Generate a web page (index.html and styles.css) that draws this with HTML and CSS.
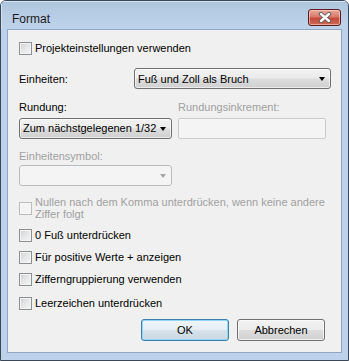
FILE: index.html
```html
<!DOCTYPE html>
<html>
<head>
<meta charset="utf-8">
<link rel="stylesheet" href="styles.css">
</head>
<body>
<div class="window">
  <div class="titlebar">
    <span class="title">Format</span>
    <button class="close" aria-label="Schließen">
      <svg width="14" height="11" viewBox="0 0 14 11">
        <path d="M3 2 L11 9 M11 2 L3 9" stroke="#5a5a5a" stroke-width="4.2" stroke-linecap="round"/>
        <path d="M3 2 L11 9 M11 2 L3 9" stroke="#ffffff" stroke-width="2.4" stroke-linecap="round"/>
      </svg>
    </button>
  </div>
  <div class="client">
    <label class="check row-proj"><span class="box"></span><span>Projekteinstellungen verwenden</span></label>

    <div class="units-row">
      <span class="units-label">Einheiten:</span>
      <div class="combo combo-units"><span>Fuß und Zoll als Bruch</span><span class="arrow"></span></div>
    </div>

    <div class="round-grid">
      <span class="lbl">Rundung:</span>
      <span class="lbl disabled">Rundungsinkrement:</span>
      <div class="combo"><span>Zum nächstgelegenen 1/32</span><span class="arrow"></span></div>
      <div class="textbox"></div>
    </div>

    <span class="lbl disabled sym-label">Einheitensymbol:</span>
    <div class="combo combo-disabled sym-combo"><span></span><span class="arrow"></span></div>

    <label class="check check-multi disabled"><span class="box"></span><span class="multi-text">Nullen nach dem Komma unterdrücken, wenn keine andere Ziffer folgt</span></label>

    <label class="check row-fuss"><span class="box"></span><span>0 Fuß unterdrücken</span></label>
    <label class="check row-plus"><span class="box"></span><span>Für positive Werte + anzeigen</span></label>
    <label class="check row-ziff"><span class="box"></span><span>Zifferngruppierung verwenden</span></label>
    <label class="check row-leer"><span class="box"></span><span>Leerzeichen unterdrücken</span></label>

    <div class="buttons">
      <button class="btn btn-default">OK</button>
      <button class="btn">Abbrechen</button>
    </div>
  </div>
</div>
</body>
</html>
```

FILE: styles.css
```css
* { box-sizing: border-box; }
html, body { margin: 0; padding: 0; background: #ffffff; }
body {
  font-family: "Liberation Sans", Arial, sans-serif;
  font-size: 11px;
  color: #000000;
}
.window {
  width: 349px;
  height: 361px;
  border: 1px solid #3b4756;
  border-radius: 6px 6px 0 0;
  background: #bdd2ea;
  display: flex;
  flex-direction: column;
  overflow: hidden;
}
.titlebar {
  height: 28px;
  display: flex;
  align-items: flex-start;
  justify-content: space-between;
  background: linear-gradient(#adc4de 0%, #b6cce4 40%, #bed3ea 100%);
  box-shadow: inset 1px 1px 0 #d7e4f2;
}
.title {
  font-size: 12px;
  color: #1a1a1a;
  margin: 11px 0 0 11px;
  line-height: 14px;
}
.close {
  width: 33px;
  height: 17px;
  margin: 8px 7px 0 0;
  padding: 0;
  border: 1px solid #5b1c22;
  border-radius: 3px;
  background: linear-gradient(#e9a99b 0%, #d77b6c 45%, #c4493a 55%, #cf6a55 100%);
  box-shadow: inset 0 0 0 1px rgba(255,220,210,0.55);
  display: flex;
  align-items: center;
  justify-content: center;
}
.close svg { display: block; }
.client {
  margin: 0 6px;
  height: 324px;
  border: 1px solid #8fa7c2;
  background: #f0f0f0;
  padding: 0 0 0 11px;
  display: flex;
  flex-direction: column;
  align-items: flex-start;
}
.check {
  display: flex;
  align-items: center;
  gap: 3px;
  height: 13px;
  line-height: 13px;
  white-space: nowrap;
}
.box {
  width: 13px;
  height: 13px;
  flex: none;
  border: 1px solid #8e8f8f;
  background: linear-gradient(135deg, #cdd0d4 0%, #e6e7e9 50%, #f6f6f6 100%);
  box-shadow: inset 0 0 0 1px #f4f4f4;
}
.disabled { color: #a0a0a0; }
.check.disabled .box {
  border-color: #bcbcbc;
  background: #f4f4f4;
  box-shadow: inset 0 0 0 1px #f7f7f7;
}
.row-proj { margin-top: 12px; }
.units-row {
  display: flex;
  align-items: center;
  margin-top: 13px;
  height: 21px;
}
.units-label { width: 115px; }
.combo {
  height: 21px;
  border: 1px solid #707070;
  border-radius: 3px;
  background: linear-gradient(#f2f2f2 0%, #ebebeb 48%, #dddddd 52%, #cfcfcf 100%);
  box-shadow: inset 0 0 0 1px rgba(255,255,255,0.6);
  display: flex;
  align-items: center;
  justify-content: space-between;
  padding: 0 5px 0 3px;
  white-space: nowrap;
}
.combo-units { width: 197px; }
.arrow {
  width: 0;
  height: 0;
  border-left: 3.5px solid transparent;
  border-right: 3.5px solid transparent;
  border-top: 4px solid #000000;
  flex: none;
}
.round-grid {
  margin-top: 12px;
  display: grid;
  grid-template-columns: 153px 148px;
  grid-template-rows: 13px 21px;
  column-gap: 6px;
  row-gap: 4px;
  line-height: 13px;
}
.textbox {
  height: 21px;
  border: 1px solid #c9cbcf;
  border-radius: 2px;
  background: #f4f4f4;
}
.lbl { line-height: 13px; height: 13px; }
.sym-label { margin-top: 11px; }
.sym-combo {
  margin-top: 2px;
  width: 153px;
}
.combo-disabled {
  border-color: #b9bcbf;
  background: #f4f4f4;
  box-shadow: none;
}
.combo-disabled .arrow { border-top-color: #a6a6a6; }
.check-multi {
  margin-top: 10px;
  height: 24px;
  white-space: normal;
}
.multi-text {
  width: 296px;
  line-height: 12px;
}
.row-fuss { margin-top: 9px; }
.row-plus { margin-top: 9px; }
.row-ziff { margin-top: 9px; }
.row-leer { margin-top: 11px; }
.buttons {
  margin-top: 9px;
  margin-left: 122px;
  display: flex;
  gap: 8px;
}
.btn {
  width: 88px;
  height: 22px;
  font-family: "Liberation Sans", Arial, sans-serif;
  font-size: 11px;
  color: #000000;
  border: 1px solid #707070;
  border-radius: 3px;
  background: linear-gradient(#f2f2f2 0%, #ebebeb 48%, #dddddd 52%, #cfcfcf 100%);
  box-shadow: inset 0 0 0 1px rgba(255,255,255,0.7);
  padding: 0;
}
.btn-default {
  border-color: #3c7fb1;
  background: linear-gradient(#f0f5f9 0%, #e6eef4 48%, #d7e2ea 52%, #ccd9e3 100%);
  box-shadow: inset 0 0 0 1px #8fd7f5;
}
```
